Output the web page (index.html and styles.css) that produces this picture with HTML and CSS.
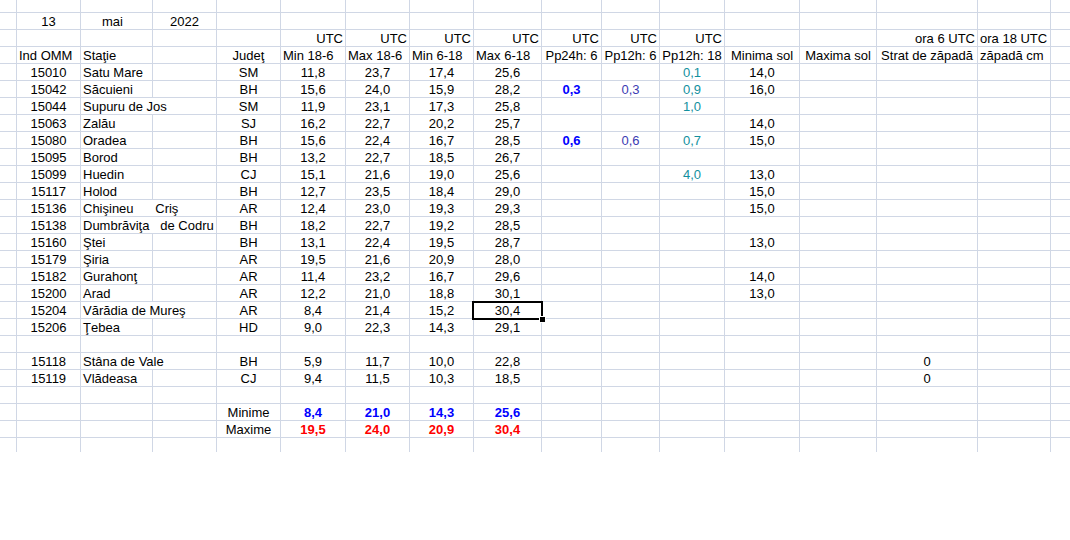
FILE: index.html
```html
<!DOCTYPE html>
<html lang="ro">
<head>
<meta charset="utf-8">
<title>Temperaturi 13 mai 2022</title>
<link rel="stylesheet" href="styles.css">
</head>
<body>
<table class="sheet">
<colgroup>
<col class="k0"><col class="k1"><col class="k2"><col class="k3"><col class="k4"><col class="k5"><col class="k6"><col class="k7"><col class="k8"><col class="k9"><col class="k10"><col class="k11"><col class="k12"><col class="k13"><col class="k14"><col class="k15"><col class="k16">
</colgroup>
<tbody>
<tr class="top"><td></td><td></td><td></td><td></td><td></td><td></td><td></td><td></td><td></td><td></td><td></td><td></td><td></td><td></td><td></td><td></td><td></td></tr>
<tr><td></td><td>13</td><td class="mai">mai</td><td>2022</td><td></td><td></td><td></td><td></td><td></td><td></td><td></td><td></td><td></td><td></td><td></td><td></td><td></td></tr>
<tr><td></td><td></td><td></td><td></td><td></td><td class="r">UTC</td><td class="r">UTC</td><td class="r">UTC</td><td class="r">UTC</td><td class="r">UTC</td><td class="r">UTC</td><td class="r">UTC</td><td></td><td></td><td class="r">ora 6 UTC</td><td class="l">ora 18 UTC</td><td></td></tr>
<tr><td></td><td class="l">Ind OMM</td><td class="l">Staţie</td><td></td><td>Judeţ</td><td class="l">Min 18-6</td><td class="l">Max 18-6</td><td class="l">Min 6-18</td><td class="l">Max 6-18</td><td>Pp24h: 6</td><td>Pp12h: 6</td><td>Pp12h: 18</td><td>Minima sol</td><td>Maxima sol</td><td>Strat de zăpadă</td><td class="l">zăpadă cm</td><td></td></tr>
<tr><td></td><td>15010</td><td class="l">Satu Mare</td><td></td><td>SM</td><td>11,8</td><td>23,7</td><td>17,4</td><td>25,6</td><td></td><td></td><td class="teal">0,1</td><td>14,0</td><td></td><td></td><td></td><td></td></tr>
<tr><td></td><td>15042</td><td class="l">Săcuieni</td><td></td><td>BH</td><td>15,6</td><td>24,0</td><td>15,9</td><td>28,2</td><td class="bblue">0,3</td><td class="indigo">0,3</td><td class="teal">0,9</td><td>16,0</td><td></td><td></td><td></td><td></td></tr>
<tr><td></td><td>15044</td><td class="l" colspan="2">Supuru de Jos</td><td>SM</td><td>11,9</td><td>23,1</td><td>17,3</td><td>25,8</td><td></td><td></td><td class="teal">1,0</td><td></td><td></td><td></td><td></td><td></td></tr>
<tr><td></td><td>15063</td><td class="l">Zalău</td><td></td><td>SJ</td><td>16,2</td><td>22,7</td><td>20,2</td><td>25,7</td><td></td><td></td><td></td><td>14,0</td><td></td><td></td><td></td><td></td></tr>
<tr><td></td><td>15080</td><td class="l">Oradea</td><td></td><td>BH</td><td>15,6</td><td>22,4</td><td>16,7</td><td>28,5</td><td class="bblue">0,6</td><td class="indigo">0,6</td><td class="teal">0,7</td><td>15,0</td><td></td><td></td><td></td><td></td></tr>
<tr><td></td><td>15095</td><td class="l">Borod</td><td></td><td>BH</td><td>13,2</td><td>22,7</td><td>18,5</td><td>26,7</td><td></td><td></td><td></td><td></td><td></td><td></td><td></td><td></td></tr>
<tr><td></td><td>15099</td><td class="l">Huedin</td><td></td><td>CJ</td><td>15,1</td><td>21,6</td><td>19,0</td><td>25,6</td><td></td><td></td><td class="teal">4,0</td><td>13,0</td><td></td><td></td><td></td><td></td></tr>
<tr><td></td><td>15117</td><td class="l">Holod</td><td></td><td>BH</td><td>12,7</td><td>23,5</td><td>18,4</td><td>29,0</td><td></td><td></td><td></td><td>15,0</td><td></td><td></td><td></td><td></td></tr>
<tr><td></td><td>15136</td><td class="l" colspan="2">Chişineu      Criş</td><td>AR</td><td>12,4</td><td>23,0</td><td>19,3</td><td>29,3</td><td></td><td></td><td></td><td>15,0</td><td></td><td></td><td></td><td></td></tr>
<tr><td></td><td>15138</td><td class="l" colspan="2">Dumbrăviţa   de Codru</td><td>BH</td><td>18,2</td><td>22,7</td><td>19,2</td><td>28,5</td><td></td><td></td><td></td><td></td><td></td><td></td><td></td><td></td></tr>
<tr><td></td><td>15160</td><td class="l">Ştei</td><td></td><td>BH</td><td>13,1</td><td>22,4</td><td>19,5</td><td>28,7</td><td></td><td></td><td></td><td>13,0</td><td></td><td></td><td></td><td></td></tr>
<tr><td></td><td>15179</td><td class="l">Şiria</td><td></td><td>AR</td><td>19,5</td><td>21,6</td><td>20,9</td><td>28,0</td><td></td><td></td><td></td><td></td><td></td><td></td><td></td><td></td></tr>
<tr><td></td><td>15182</td><td class="l">Gurahonţ</td><td></td><td>AR</td><td>11,4</td><td>23,2</td><td>16,7</td><td>29,6</td><td></td><td></td><td></td><td>14,0</td><td></td><td></td><td></td><td></td></tr>
<tr><td></td><td>15200</td><td class="l">Arad</td><td></td><td>AR</td><td>12,2</td><td>21,0</td><td>18,8</td><td>30,1</td><td></td><td></td><td></td><td>13,0</td><td></td><td></td><td></td><td></td></tr>
<tr><td></td><td>15204</td><td class="l" colspan="2">Vărădia de Mureş</td><td>AR</td><td>8,4</td><td>21,4</td><td>15,2</td><td class="sel">30,4</td><td></td><td></td><td></td><td></td><td></td><td></td><td></td><td></td></tr>
<tr><td></td><td>15206</td><td class="l">Ţebea</td><td></td><td>HD</td><td>9,0</td><td>22,3</td><td>14,3</td><td>29,1</td><td></td><td></td><td></td><td></td><td></td><td></td><td></td><td></td></tr>
<tr><td></td><td></td><td></td><td></td><td></td><td></td><td></td><td></td><td></td><td></td><td></td><td></td><td></td><td></td><td></td><td></td><td></td></tr>
<tr><td></td><td>15118</td><td class="l" colspan="2">Stâna de Vale</td><td>BH</td><td>5,9</td><td>11,7</td><td>10,0</td><td>22,8</td><td></td><td></td><td></td><td></td><td></td><td>0</td><td></td><td></td></tr>
<tr><td></td><td>15119</td><td class="l">Vlădeasa</td><td></td><td>CJ</td><td>9,4</td><td>11,5</td><td>10,3</td><td>18,5</td><td></td><td></td><td></td><td></td><td></td><td>0</td><td></td><td></td></tr>
<tr><td></td><td></td><td></td><td></td><td></td><td></td><td></td><td></td><td></td><td></td><td></td><td></td><td></td><td></td><td></td><td></td><td></td></tr>
<tr><td></td><td></td><td></td><td></td><td>Minime</td><td class="bblue">8,4</td><td class="bblue">21,0</td><td class="bblue">14,3</td><td class="bblue">25,6</td><td></td><td></td><td></td><td></td><td></td><td></td><td></td><td></td></tr>
<tr><td></td><td></td><td></td><td></td><td>Maxime</td><td class="bred">19,5</td><td class="bred">24,0</td><td class="bred">20,9</td><td class="bred">30,4</td><td></td><td></td><td></td><td></td><td></td><td></td><td></td><td></td></tr>
<tr class="last"><td></td><td></td><td></td><td></td><td></td><td></td><td></td><td></td><td></td><td></td><td></td><td></td><td></td><td></td><td></td><td></td><td></td></tr>
</tbody>
</table>
</body>
</html>
```
FILE: styles.css
```css
html, body {
  margin: 0;
  padding: 0;
  background: #ffffff;
}

body {
  width: 1070px;
  height: 540px;
  overflow: hidden;
  font-family: "Liberation Sans", Arial, sans-serif;
  font-size: 13px;
  color: #000000;
}

.sheet {
  border-collapse: separate;
  border-spacing: 0;
  table-layout: fixed;
  width: 1070px;
}

.k0 { width: 17px; }
.k1 { width: 64px; }
.k2 { width: 72px; }
.k3 { width: 64px; }
.k4 { width: 64px; }
.k5 { width: 65px; }
.k6 { width: 64px; }
.k7 { width: 64px; }
.k8 { width: 68px; }
.k9 { width: 60px; }
.k10 { width: 58px; }
.k11 { width: 65px; }
.k12 { width: 75px; }
.k13 { width: 77px; }
.k14 { width: 101px; }
.k15 { width: 73px; }
.k16 { width: 19px; }

.sheet tr {
  height: 17px;
}

.sheet tr.top {
  height: 13px;
}

.sheet tr.last {
  height: 14px;
}

.sheet td {
  border-right: 1px solid #d0d7e5;
  border-bottom: 1px solid #d0d7e5;
  padding: 2px 2px 0;
  line-height: 14px;
  text-align: center;
  vertical-align: bottom;
  white-space: pre;
  overflow: visible;
}

.sheet tr.top td {
  padding: 0;
  line-height: 0;
}

.sheet tr.last td {
  padding: 0;
  border-bottom: 0;
  line-height: 0;
}

.sheet td:last-child {
  border-right: 0;
}

.sheet td.l { text-align: left; }
.sheet td.r { text-align: right; }
.sheet td.mai { padding-right: 10px; }

.bblue { color: #0000ff; font-weight: bold; }
.bred { color: #ff0000; font-weight: bold; }
.indigo { color: #3b3bb3; }
.teal { color: #12909e; }

.sheet td.sel {
  position: relative;
}

.sheet td.sel::before {
  content: "";
  position: absolute;
  left: -2px;
  top: -1px;
  width: 71px;
  height: 19px;
  box-sizing: border-box;
  border: 2px solid #000000;
}

.sheet td.sel::after {
  content: "";
  position: absolute;
  left: 65px;
  top: 14px;
  width: 5px;
  height: 5px;
  background: #000000;
  border: 1px solid #ffffff;
}
```
